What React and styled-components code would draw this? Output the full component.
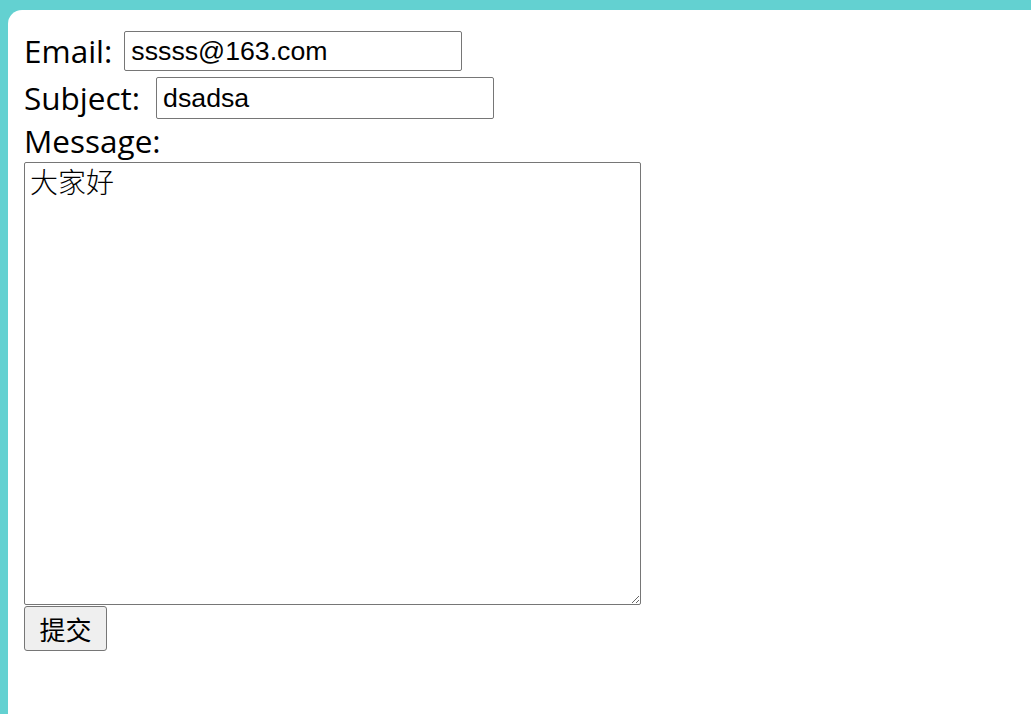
import React from "react";
import styled, { createGlobalStyle } from "styled-components";

const Global = createGlobalStyle`
  html, body { margin: 0; padding: 0; background: #63d1d1; }
  body { font-family: "Open Sans", "Noto Sans CJK SC", sans-serif; }
`;

const Panel = styled.div`
  margin: 10px 0 0 8px;
  min-height: 704px;
  background: #ffffff;
  border-top-left-radius: 14px;
  box-sizing: border-box;
  padding: 30px 16px 0 16px;
`;

const Form = styled.form`
  display: flex;
  flex-direction: column;
  align-items: flex-start;
`;

const Row = styled.div`
  display: flex;
  align-items: center;
  gap: ${(p) => p.$gap || 10}px;
  margin-top: ${(p) => p.$mt || 0}px;
`;

const Label = styled.label`
  font-family: "Open Sans", "Noto Sans CJK SC", sans-serif;
  font-size: 31.5px;
  line-height: 40px;
  color: #000;
  margin-top: ${(p) => p.$mt || 0}px;
`;

const TextInput = styled.input`
  width: 338px;
  height: ${(p) => p.$h || 40}px;
  box-sizing: border-box;
  border: 1.5px solid #767676;
  border-radius: 2px;
  padding: 0 6px;
  font-family: "Liberation Sans", Arial, sans-serif;
  font-size: 26.7px;
  color: #000;
  background: #fff;
  outline: none;
`;

const TextArea = styled.textarea`
  width: 617px;
  height: 443px;
  box-sizing: border-box;
  border: 1.5px solid #767676;
  border-radius: 2px;
  padding: 0 5px;
  font-family: "Noto Sans CJK SC", "DejaVu Sans Mono", monospace;
  font-size: 28px;
  font-weight: 300;
  line-height: 36px;
  color: #000;
  background: #fff;
  outline: none;
  resize: both;
  margin-top: 1px;
`;

const Button = styled.button`
  width: 83px;
  height: 45px;
  box-sizing: border-box;
  border: 1.5px solid #767676;
  border-radius: 3px;
  background: #efefef;
  font-family: "Noto Sans CJK SC", sans-serif;
  font-size: 26px;
  color: #000;
  padding: 0;
  margin-top: 1px;
`;

export default function App() {
  return (
    <>
      <Global />
      <Panel>
        <Form onSubmit={(e) => e.preventDefault()}>
          <Row $gap={12} style={{ marginTop: -9 }}>
            <Label>Email:</Label>
            <TextInput defaultValue="sssss@163.com" />
          </Row>
          <Row $gap={16} $mt={6}>
            <Label>Subject:</Label>
            <TextInput $h={42} defaultValue="dsadsa" />
          </Row>
          <Label $mt={2}>Message:</Label>
          <TextArea defaultValue="大家好" />
          <Button type="submit">提交</Button>
        </Form>
      </Panel>
    </>
  );
}
